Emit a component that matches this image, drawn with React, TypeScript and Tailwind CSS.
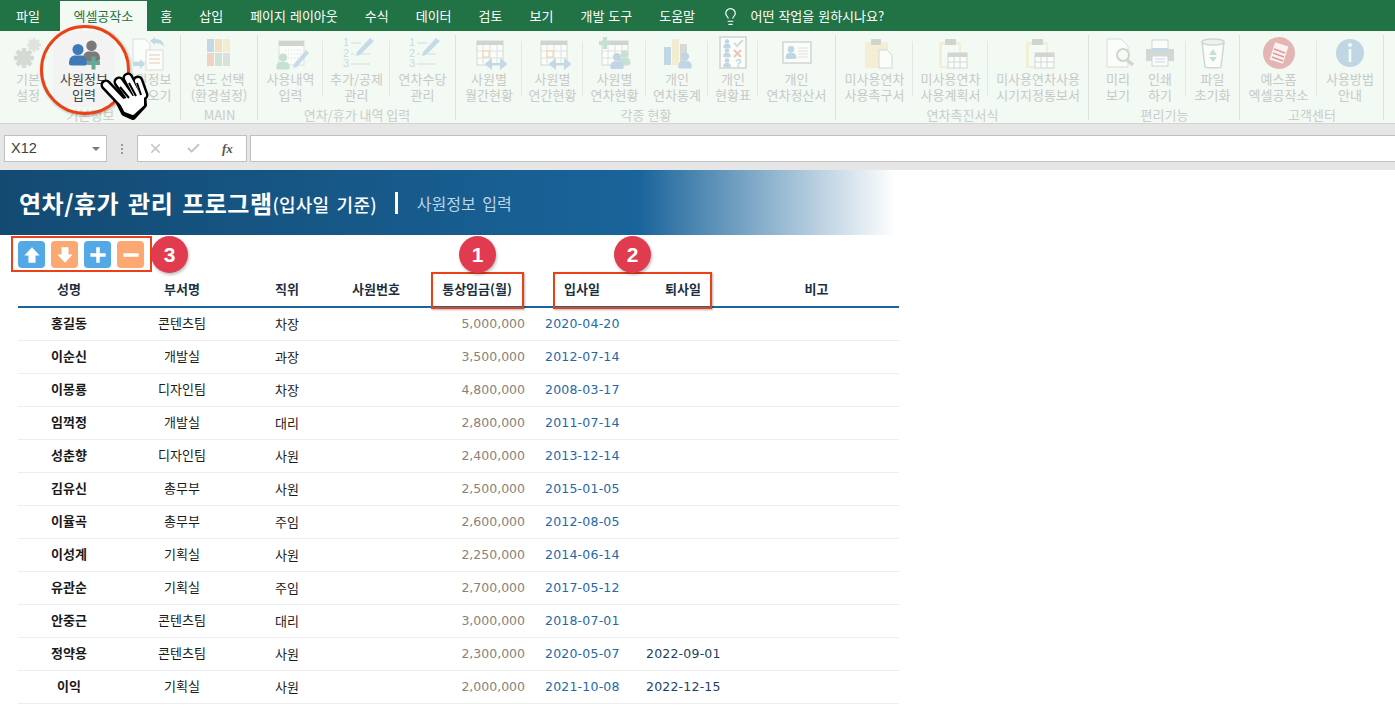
import React from 'react';
import { Check, Lightbulb, X } from 'lucide-react';

const SANS = 'font-["Noto_Sans_CJK_KR","Noto_Sans",sans-serif]';

const TABS = [
  { label: '엑셀공작소', active: true },
  { label: '홈' },
  { label: '삽입' },
  { label: '페이지 레이아웃' },
  { label: '수식' },
  { label: '데이터' },
  { label: '검토' },
  { label: '보기' },
  { label: '개발 도구' },
  { label: '도움말' },
];

const Svg: React.FC<{ children: React.ReactNode; w?: number }> = ({ children, w = 40 }) => (
  <svg width={w} height={40} viewBox={`0 0 ${w} 40`} fill="none">
    {children}
  </svg>
);

const Gear: React.FC<{ cx: number; cy: number; r: number; fill: string }> = ({ cx, cy, r, fill }) => (
  <g>
    {[0, 45, 90, 135].map((a) => (
      <rect key={a} x={cx - r * 0.28} y={cy - r * 1.25} width={r * 0.56} height={r * 2.5} fill={fill} transform={`rotate(${a} ${cx} ${cy})`} />
    ))}
    <circle cx={cx} cy={cy} r={r * 0.62} stroke={fill} strokeWidth={r * 0.55} fill="none" />
  </g>
);

const Person: React.FC<{ x: number; y: number; s?: number; fill: string }> = ({ x, y, s = 1, fill }) => (
  <g transform={`translate(${x} ${y}) scale(${s})`}>
    <circle cx="0" cy="-6" r="5.5" fill={fill} />
    <path d="M-9 8c0-6 3-8 6-8h6c3 0 6 2 6 8 0 1-1 2-2 2H-7c-1 0-2-1-2-2z" fill={fill} />
  </g>
);

const ListPen = () => (
  <Svg>
    <g fill="#c6dbe2" fontSize="11" fontFamily="Liberation Sans">
      <text x="6" y="14">1</text>
      <text x="6" y="25">2</text>
      <text x="6" y="35">3</text>
    </g>
    <path d="M14 11h10M14 22h3M24 22h9M14 32h19" stroke="#d5ddd8" />
    <path d="M19 24l1-4L33 6l4 3-14 14z" fill="#c6dbe8" />
  </Svg>
);

const CalArrow = () => (
  <Svg>
    <rect x="8" y="9" width="26" height="24" fill="#fbfdfb" stroke="#d4d8d4" />
    <rect x="8" y="9" width="26" height="4" fill="#d0d4cf" />
    <path d="M14 13v20M21 13v20M28 13v20M8 19h26M8 26h26" stroke="#dde1dd" />
    <rect x="14" y="19" width="6" height="6" fill="#fbfdfb" stroke="#f0cfa8" />
    <path d="M20 32h14M17 32l5-4v8zM37 32l-5-4v8z" fill="#c3d9e6" stroke="#c3d9e6" strokeWidth="2" />
  </Svg>
);

const ClipCal = () => (
  <Svg>
    <rect x="8" y="10" width="22" height="26" rx="1" fill="#f3eed4" />
    <rect x="11" y="13" width="17" height="21" fill="#f4faf4" />
    <rect x="14" y="7" width="11" height="6" rx="1" fill="#d0d4cf" />
    <rect x="17" y="21" width="19" height="15" fill="#fbfdfb" stroke="#d2d6d2" />
    <rect x="17" y="21" width="19" height="4" fill="#d2d6d2" />
    <path d="M23 25v11M29 25v11M17 30h19" stroke="#d2d6d2" />
  </Svg>
);

const ICONS: Record<string, React.ReactNode> = {
  settings: (
    <Svg>
      <Gear cx={16} cy={26} r={8} fill="#d6dad5" />
      <Gear cx={26} cy={13} r={5.5} fill="#dfe3de" />
    </Svg>
  ),
  addUser: (
    <Svg>
      <Person x={27.5} y={19.5} s={0.95} fill="#7a7a7a" />
      <Person x={14} y={23.5} fill="#3f79b7" />
      <path d="M23 29h4.5v-4.5h4V29H36v4h-4.5v4.5h-4V33H23z" fill="#66a998" />
    </Svg>
  ),
  load: (
    <Svg>
      <path d="M5 7h12l5 5v18H5z" fill="#fbfdfb" stroke="#dadeda" />
      <rect x="18" y="18" width="17" height="20" fill="#fbfdfb" stroke="#dadeda" />
      <path d="M21 23h11M21 27h11M21 31h11" stroke="#ecc9b3" />
      <path d="M27 5l-5 4 5 4v-2c4 0 7 1 9 4 0-6-4-8-9-8z" fill="#c3d9e6" />
      <path d="M5 30h7v-3l5 5-5 5v-3H5z" fill="#c3d9e6" />
    </Svg>
  ),
  year: (
    <Svg>
      <rect x="8" y="7" width="7" height="13" fill="#c3d9e6" />
      <rect x="16" y="7" width="7" height="13" fill="#f2e0c2" />
      <rect x="24" y="7" width="7" height="13" fill="#f2ecd2" />
      <rect x="8" y="21" width="7" height="13" fill="#eed3c4" />
      <rect x="16" y="21" width="7" height="13" fill="#cfe3d6" />
      <rect x="24" y="21" width="7" height="13" fill="#dbe0da" />
    </Svg>
  ),
  usage: (
    <Svg>
      <rect x="8" y="9" width="25" height="24" fill="#fbfdfb" stroke="#dde1dd" />
      <rect x="8" y="9" width="25" height="5" fill="#d0d4cf" />
      <path d="M14 18h16M14 22h16M14 26h16" stroke="#d9ddd9" strokeDasharray="1 2" />
      <Person x={12} y={30} s={0.75} fill="#c6e0d1" />
      <path d="M23 32l12-14 3 3-12 14-4 1z" fill="#c6dbe8" />
    </Svg>
  ),
  list: <ListPen />,
  cal: <CalArrow />,
  calPeople: (
    <Svg>
      <rect x="7" y="9" width="26" height="24" fill="#fbfdfb" stroke="#d4d8d4" />
      <rect x="13" y="9" width="20" height="4" fill="#d0d4cf" />
      <path d="M13 13v20M20 13v20M27 13v20M7 19h26M7 26h26" stroke="#dde1dd" />
      <path d="M4 9h4V5h4v4h4v4h-4v4H8v-4H4z" fill="#c4e0d2" />
      <Person x={29.5} y={26} s={0.68} fill="#c6e0d1" />
      <Person x={22} y={29.6} s={0.75} fill="#c0d6e4" />
    </Svg>
  ),
  stats: (
    <Svg>
      <rect x="7" y="15" width="7" height="18" fill="#c0d8e4" />
      <rect x="15" y="7" width="7" height="26" fill="#f2ecd0" />
      <rect x="23" y="12" width="7" height="18" fill="#d6d9d4" />
      <Person x={28} y={29} s={0.75} fill="#c0d6e4" />
    </Svg>
  ),
  sheet: (
    <Svg>
      <rect x="7" y="5" width="26" height="31" fill="#fbfdfb" stroke="#cfd4cf" strokeWidth="1.5" />
      <Person x={14} y={12} s={0.42} fill="#c0d6e4" />
      <Person x={14} y={21} s={0.42} fill="#c0d6e4" />
      <Person x={14} y={31} s={0.42} fill="#c0d6e4" />
      <path d="M21 11l3 3 6-6" stroke="#c9e2d2" strokeWidth="2" />
      <path d="M21 18l7 7M28 18l-7 7" stroke="#eec4b8" strokeWidth="2" />
      <text x="22" y="35" fontSize="11" fill="#c0d6e4" fontFamily="Liberation Sans" fontWeight="700">?</text>
    </Svg>
  ),
  card: (
    <Svg w={44}>
      <rect x="8" y="10" width="28" height="21" fill="#fbfdfb" stroke="#d2d6d2" strokeWidth="1.5" />
      <Person x={16} y={21} s={0.6} fill="#c0d6e4" />
      <path d="M23 16h10M23 19h10M23 22h10M23 25h10" stroke="#dde1dd" />
    </Svg>
  ),
  clipDoc: (
    <Svg>
      <rect x="10" y="10" width="23" height="26" rx="1" fill="#f3eed4" />
      <rect x="16" y="7" width="10" height="6" rx="1" fill="#d0d4cf" />
      <path d="M24 18h8l5 5v13H24z" fill="#fbfdfb" stroke="#d4d8d4" />
    </Svg>
  ),
  clipCal: <ClipCal />,
  preview: (
    <Svg>
      <path d="M9 7h14l7 7v21H9z" fill="#fbfdfb" stroke="#d8dcd8" />
      <circle cx="25" cy="23" r="6" fill="#f4faf4" stroke="#cfd4cf" strokeWidth="2" />
      <path d="M29 28l6 5" stroke="#cfd4cf" strokeWidth="3" />
    </Svg>
  ),
  print: (
    <Svg>
      <rect x="12" y="8" width="16" height="11" fill="#fbfdfb" stroke="#d2d6d2" />
      <path d="M6 17h28v12H6z" fill="#d4d8d4" />
      <rect x="12" y="16" width="16" height="3" fill="#c3d9e6" />
      <rect x="12" y="24" width="16" height="10" fill="#fbfdfb" stroke="#d2d6d2" />
      <path d="M15 27h10M15 30h10" stroke="#c3d9e6" />
    </Svg>
  ),
  trash: (
    <Svg>
      <path d="M9 10l3 25c0 1 16 1 16 0l3-25z" fill="#fbfdfb" stroke="#d2d6d2" strokeWidth="1.5" />
      <ellipse cx="20" cy="10" rx="11" ry="3" fill="#eef2ee" stroke="#d2d6d2" strokeWidth="1.5" />
      <path d="M20 17l4 6h-8zM16 25h8l-4 5z" fill="#c6e0d1" />
    </Svg>
  ),
  xform: (
    <Svg w={44}>
      <circle cx="22" cy="21" r="16" fill="#e3b5b3" />
      <rect x="15" y="12" width="14" height="18" fill="#fbf1f0" transform="rotate(18 22 21)" />
      <path d="M17 17l11 4M16 21l11 4M15 25l11 4" stroke="#dc9d9b" strokeWidth="1.5" />
    </Svg>
  ),
  info: (
    <Svg>
      <circle cx="20" cy="21" r="14" fill="#c0d6e4" />
      <circle cx="20" cy="13" r="2" fill="#f4faf4" />
      <rect x="18.7" y="17" width="2.6" height="13" fill="#f4faf4" />
    </Svg>
  ),
};

type RibbonItem = { icon: string; lines: string[]; w: string; sep?: boolean; hot?: boolean };
type RibbonGroup = { label: string; w: string; pl?: string; items: RibbonItem[] };

const GROUPS: RibbonGroup[] = [
  {
    label: '기본정보',
    w: 'w-[181px]',
    items: [
      { icon: 'settings', lines: ['기본', '설정'], w: 'w-[53px] pl-[3px]' },
      { icon: 'addUser', lines: ['사원정보', '입력'], w: 'w-[62px]', hot: true },
      { icon: 'load', lines: ['사원정보', '불러오기'], w: 'w-[65px]' },
    ],
  },
  {
    label: 'MAIN',
    w: 'w-[77px]',
    items: [{ icon: 'year', lines: ['연도 선택', '(환경설정)'], w: 'w-[76px]' }],
  },
  {
    label: '연차/휴가 내역 입력',
    w: 'w-[198px]',
    items: [
      { icon: 'usage', lines: ['사용내역', '입력'], w: 'w-[65px]', sep: true },
      { icon: 'list', lines: ['추가/공제', '관리'], w: 'w-[67px]', sep: true },
      { icon: 'list', lines: ['연차수당', '관리'], w: 'w-[65px]' },
    ],
  },
  {
    label: '각종 현황',
    w: 'w-[380px]',
    items: [
      { icon: 'cal', lines: ['사원별', '월간현황'], w: 'w-[66px]', sep: true },
      { icon: 'cal', lines: ['사원별', '연간현황'], w: 'w-[61px]', sep: true },
      { icon: 'calPeople', lines: ['사원별', '연차현황'], w: 'w-[63px]', sep: true },
      { icon: 'stats', lines: ['개인', '연차통계'], w: 'w-[62px]', sep: true },
      { icon: 'sheet', lines: ['개인', '현황표'], w: 'w-[50px]', sep: true },
      { icon: 'card', lines: ['개인', '연차정산서'], w: 'w-[77px]' },
    ],
  },
  {
    label: '연차촉진서식',
    w: 'w-[253px]',
    items: [
      { icon: 'clipDoc', lines: ['미사용연차', '사용촉구서'], w: 'w-[77px]', sep: true },
      { icon: 'clipCal', lines: ['미사용연차', '사용계획서'], w: 'w-[75px]', sep: true },
      { icon: 'clipCal', lines: ['미사용연차사용', '시기지정통보서'], w: 'w-[100px]' },
    ],
  },
  {
    label: '편리기능',
    w: 'w-[151px]',
    pl: 'pl-[8px]',
    items: [
      { icon: 'preview', lines: ['미리', '보기'], w: 'w-[42px]' },
      { icon: 'print', lines: ['인쇄', '하기'], w: 'w-[47px] pr-[5px]', sep: true },
      { icon: 'trash', lines: ['파일', '초기화'], w: 'w-[53px]' },
    ],
  },
  {
    label: '고객센터',
    w: 'w-[144px]',
    items: [
      { icon: 'xform', lines: ['예스폼', '엑셀공작소'], w: 'w-[77px]', sep: true },
      { icon: 'info', lines: ['사용방법', '안내'], w: 'w-[66px]' },
    ],
  },
];

const EMPLOYEES = [
  ['홍길동', '콘텐츠팀', '차장', '5,000,000', '2020-04-20', ''],
  ['이순신', '개발실', '과장', '3,500,000', '2012-07-14', ''],
  ['이몽룡', '디자인팀', '차장', '4,800,000', '2008-03-17', ''],
  ['임꺽정', '개발실', '대리', '2,800,000', '2011-07-14', ''],
  ['성춘향', '디자인팀', '사원', '2,400,000', '2013-12-14', ''],
  ['김유신', '총무부', '사원', '2,500,000', '2015-01-05', ''],
  ['이율곡', '총무부', '주임', '2,600,000', '2012-08-05', ''],
  ['이성계', '기획실', '사원', '2,250,000', '2014-06-14', ''],
  ['유관순', '기획실', '주임', '2,700,000', '2017-05-12', ''],
  ['안중근', '콘텐츠팀', '대리', '3,000,000', '2018-07-01', ''],
  ['정약용', '콘텐츠팀', '사원', '2,300,000', '2020-05-07', '2022-09-01'],
  ['이익', '기획실', '사원', '2,000,000', '2021-10-08', '2022-12-15'],
];

const GRID = 'grid grid-cols-[102px_124px_86px_92px_110px_100px_102px_165px]';
const DIGITS = 'font-["DejaVu_Sans",sans-serif] text-[12.5px] pt-[1px]';

const RibbonButton: React.FC<{ item: RibbonItem }> = ({ item }) => (
  <div className={`${item.w} relative flex flex-col items-center ${item.hot ? 'bg-[#f3f3f3]' : ''}`}>
    <div className="h-[38px] mt-[2px] flex items-center justify-center">{ICONS[item.icon]}</div>
    <div className={`text-[13px] leading-[16px] text-center whitespace-nowrap ${item.hot ? 'text-[#404040]' : 'text-[#c6cac6]'}`}>
      {item.lines.map((l) => (
        <div key={l}>{l}</div>
      ))}
    </div>
    {item.sep && <div className="absolute right-0 top-[10px] h-[55px] w-px bg-[#e3e8e3]" />}
  </div>
);

const Ribbon = () => (
  <div className="h-[93px] bg-[#f3f9f3] flex border-b border-[#d4d4d4] shrink-0">
    {GROUPS.map((g) => (
      <div key={g.label} className={`${g.w} ${g.pl ?? ''} relative flex flex-col`}>
        <div className="flex h-[76px]">
          {g.items.map((item) => (
            <RibbonButton key={item.lines.join()} item={item} />
          ))}
        </div>
        <div className="absolute left-0 right-0 bottom-[-1px] h-[18px] leading-[18px] text-center text-[13px] text-[#c9cdc9]">{g.label}</div>
        <div className="absolute right-0 top-[4px] h-[85px] w-px bg-[#dde2dd]" />
      </div>
    ))}
  </div>
);

const FormulaBar = () => (
  <div className="h-[46px] bg-[#e6e6e6] pt-[11px] flex shrink-0 items-start">
    <div className="ml-[4px] w-[103px] h-[27px] bg-white border border-[#c0c0c0] flex items-center justify-between pl-[6px] pr-[6px]">
      <span className='text-[14.5px] text-[#404040] font-["Liberation_Sans",sans-serif]'>X12</span>
      <span className="w-0 h-0 border-l-[4px] border-r-[4px] border-t-[4px] border-l-transparent border-r-transparent border-t-[#7a7a7a]" />
    </div>
    <div className="w-[30px] h-[27px] flex flex-col items-center justify-center gap-[2px]">
      <span className="w-[2px] h-[2px] bg-[#9a9a9a]" />
      <span className="w-[2px] h-[2px] bg-[#9a9a9a]" />
      <span className="w-[2px] h-[2px] bg-[#9a9a9a]" />
    </div>
    <div className="w-[110px] h-[27px] bg-white border border-[#c0c0c0] flex items-center pl-[10px] gap-[23px]">
      <X size={15} color="#c4c4c4" strokeWidth={2.5} />
      <Check size={15} color="#c4c4c4" strokeWidth={3} />
      <span className='text-[13px] italic font-bold -ml-[2px] text-[#555] font-["Liberation_Serif",serif]'>fx</span>
    </div>
    <div className="ml-[3px] flex-1 h-[27px] bg-white border border-[#c0c0c0] border-r-0" />
  </div>
);

const Toolbutton: React.FC<{ bg: string; d: string }> = ({ bg, d }) => (
  <div className={`${bg} w-[27px] h-[27px] rounded-[4px] flex items-center justify-center`}>
    <svg width="20" height="20" viewBox="0 0 17 17">
      <path d={d} fill="#fff" />
    </svg>
  </div>
);

const Badge: React.FC<{ n: number; className: string }> = ({ n, className }) => (
  <div className={`${className} absolute w-[37px] h-[37px] rounded-full bg-[#e13b50] shadow-[1px_2px_3px_rgba(0,0,0,0.25)] text-white text-[21px] font-bold flex items-center justify-center font-["Liberation_Sans",sans-serif]`}>
    {n}
  </div>
);

const HandCursor = () => {
  const fingers = ['M6 14L24 33', 'M19 11L31 28', 'M28 7L38 26', 'M38 10L43 24'];
  return (
    <svg className="absolute left-[100px] top-[71px]" width="50" height="50" viewBox="0 0 50 50" fill="none">
      {fingers.map((d) => (
        <path key={d} d={d} stroke="#000" strokeWidth="11" strokeLinecap="round" />
      ))}
      <path d="M18 30L43 22L44 34L33 46L24 42Z" fill="#000" stroke="#000" strokeWidth="6" strokeLinejoin="round" />
      {fingers.map((d) => (
        <path key={d} d={d} stroke="#fff" strokeWidth="6" strokeLinecap="round" />
      ))}
      <path d="M20 30L43 23L43 34L33 43L25 40Z" fill="#fff" stroke="#fff" strokeWidth="2" strokeLinejoin="round" />
      <path d="M20 16L29 27M29 12L36 25M37 12L41 24" stroke="#000" strokeWidth="2" />
    </svg>
  );
};

const App: React.FC = () => {
  return (
    <div className={`${SANS} relative w-[1395px] h-[708px] overflow-hidden bg-white flex flex-col`}>
      {/* tabs */}
      <div className="h-[31px] bg-[#217346] flex items-end text-[13px] text-white shrink-0 [word-spacing:1px]">
        <div className="h-[30px] leading-[29px] pl-[16px] pr-[20px]">파일</div>
        {TABS.map((t) => (
          <div
            key={t.label}
            className={`h-[30px] leading-[29px] px-[13.5px] whitespace-nowrap ${t.active ? 'bg-[#f3f9f3] text-[#217346]' : ''}`}
          >
            {t.label}
          </div>
        ))}
        <div className="ml-[12px] h-[30px] flex items-center gap-[11px]">
          <Lightbulb size={19} strokeWidth={1.5} />
          <span>어떤 작업을 원하시나요?</span>
        </div>
      </div>

      <Ribbon />
      <FormulaBar />

      {/* banner */}
      <div className="w-[900px] h-[65px] shrink-0 flex items-center pl-[19px] text-white bg-[linear-gradient(90deg,#134a72_0%,#19649a_71%,#ffffff_99.5%)]">
        <span className="text-[24px] font-semibold tracking-[0.5px] [word-spacing:3px] whitespace-nowrap">연차/휴가 관리 프로그램</span>
        <span className="text-[18px] font-medium mt-[3px] tracking-[0.2px] [word-spacing:3px] whitespace-nowrap">(입사일 기준)</span>
        <span className="ml-[18px] w-[3px] h-[22px] bg-white" />
        <span className="ml-[19px] text-[16px] text-[#bcd6e8] [word-spacing:3px] whitespace-nowrap">사원정보 입력</span>
      </div>

      {/* move / add / remove */}
      <div className="h-[37px] shrink-0 flex items-start pt-[6px] pl-[18px] gap-[6px]">
        <Toolbutton bg="bg-[#52a9e6]" d="M8.5 2L15 9h-3.5v6h-6V9H2z" />
        <Toolbutton bg="bg-[#fba873]" d="M8.5 15L15 8h-3.5V2h-6v6H2z" />
        <Toolbutton bg="bg-[#52a9e6]" d="M7 2h3v5h5v3h-5v5H7v-5H2V7h5z" />
        <Toolbutton bg="bg-[#fba873]" d="M2 7h13v3H2z" />
      </div>

      {/* table */}
      <div className="ml-[18px] w-[881px]">
        <div className={`${GRID} h-[36px] items-center text-center text-[13px] font-semibold text-[#1c2f40] border-b-2 border-[#1b659c]`}>
          <div>성명</div>
          <div>부서명</div>
          <div>직위</div>
          <div>사원번호</div>
          <div>통상임금(월)</div>
          <div>입사일</div>
          <div>퇴사일</div>
          <div>비고</div>
        </div>
        {EMPLOYEES.map(([name, dept, rank, pay, joined, left]) => (
          <div key={name} className={`${GRID} h-[33px] items-center text-center text-[13px] text-[#1a1a1a] border-b border-[#eeeeee]`}>
            <div className="font-bold pb-[2px]">{name}</div>
            <div className="pb-[2px]">{dept}</div>
            <div className="pb-[1px]">{rank}</div>
            <div />
            <div className={`${DIGITS} text-right pr-[7px] text-[#8a8278]`}>{pay}</div>
            <div className={`${DIGITS} text-left pl-[13px] text-[#1e6aa6] tracking-[0.2px]`}>{joined}</div>
            <div className={`${DIGITS} text-left pl-[14px] text-[#1c3f66] tracking-[0.2px]`}>{left}</div>
            <div />
          </div>
        ))}
      </div>

      {/* annotations */}
      <div className="absolute left-[40px] top-[25px] w-[90px] h-[90px] rounded-full border-[3px] border-[#ea4118] shadow-[1px_1px_3px_rgba(0,0,0,0.3)]" />
      <HandCursor />
      <div className="absolute left-[11px] top-[236px] w-[141px] h-[36px] border-2 border-[#ec4117]" />
      <div className="absolute left-[431px] top-[272px] w-[93px] h-[37px] border-2 border-[#ec4117] shadow-[1px_1px_2px_rgba(0,0,0,0.3)]" />
      <div className="absolute left-[553px] top-[272px] w-[159px] h-[37px] border-2 border-[#ec4117] shadow-[1px_1px_2px_rgba(0,0,0,0.3)]" />
      <Badge n={3} className="left-[151px] top-[236px]" />
      <Badge n={1} className="left-[459px] top-[236px]" />
      <Badge n={2} className="left-[614px] top-[236px]" />
    </div>
  );
};

export default App;
